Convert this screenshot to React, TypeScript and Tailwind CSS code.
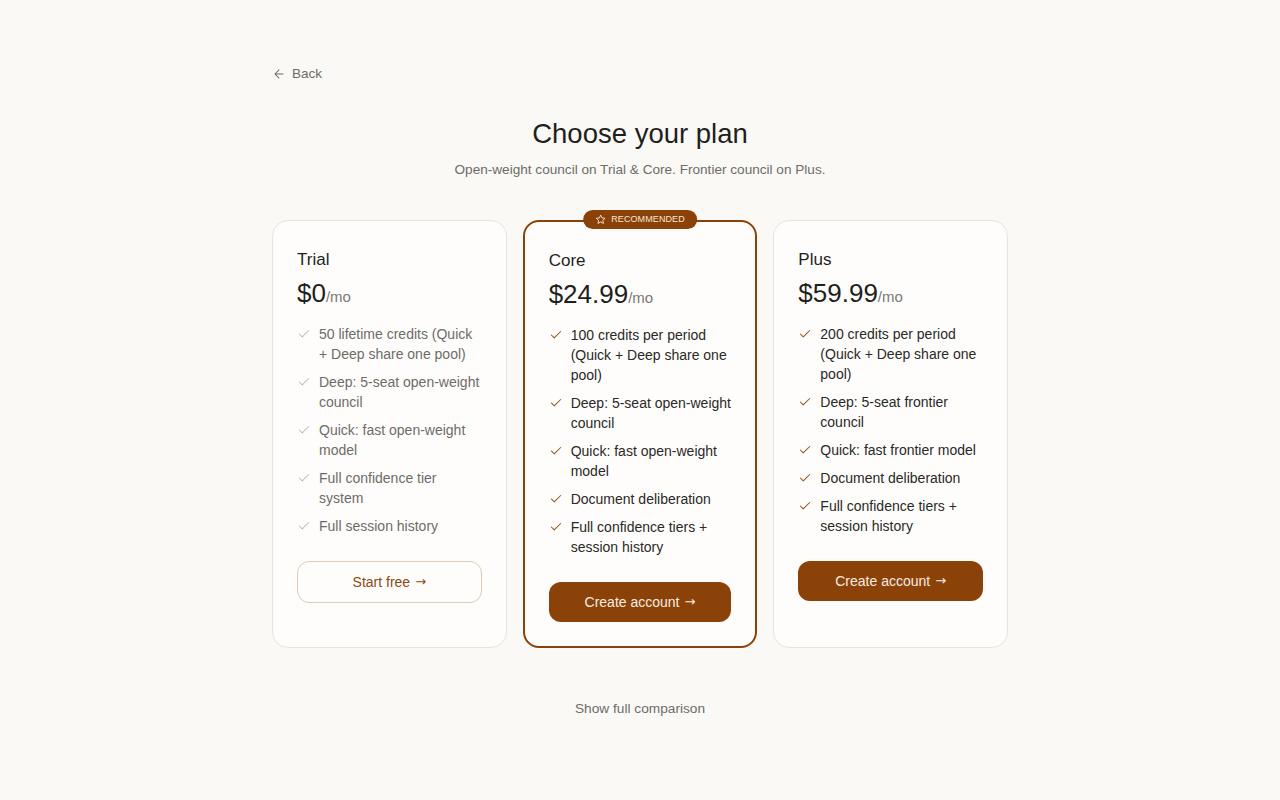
import React from "react";

function Check({ muted }: { muted?: boolean }) {
  return (
    <svg
      viewBox="0 0 24 24"
      className="w-3.5 h-3.5 shrink-0 mt-[3px]"
      fill="none"
      stroke={muted ? "#bdbbb3" : "#9a4d12"}
      strokeWidth={1.75}
      strokeLinecap="round"
      strokeLinejoin="round"
    >
      <path d="M20 6 9 17l-5-5" />
    </svg>
  );
}

function Star() {
  return (
    <svg
      viewBox="0 0 24 24"
      className="w-[11px] h-[11px]"
      fill="none"
      stroke="#f6e7d6"
      strokeWidth={2}
      strokeLinejoin="round"
    >
      <path d="M12 2.5l2.9 6.1 6.6.8-4.9 4.6 1.3 6.6L12 17.3l-5.9 3.3 1.3-6.6-4.9-4.6 6.6-.8z" />
    </svg>
  );
}

type Plan = {
  name: string;
  price: string;
  features: string[];
  cta: string;
  variant: "trial" | "core" | "plus";
};

const plans: Plan[] = [
  {
    name: "Trial",
    price: "$0",
    features: [
      "50 lifetime credits (Quick + Deep share one pool)",
      "Deep: 5-seat open-weight council",
      "Quick: fast open-weight model",
      "Full confidence tier system",
      "Full session history",
    ],
    cta: "Start free",
    variant: "trial",
  },
  {
    name: "Core",
    price: "$24.99",
    features: [
      "100 credits per period (Quick + Deep share one pool)",
      "Deep: 5-seat open-weight council",
      "Quick: fast open-weight model",
      "Document deliberation",
      "Full confidence tiers + session history",
    ],
    cta: "Create account",
    variant: "core",
  },
  {
    name: "Plus",
    price: "$59.99",
    features: [
      "200 credits per period (Quick + Deep share one pool)",
      "Deep: 5-seat frontier council",
      "Quick: fast frontier model",
      "Document deliberation",
      "Full confidence tiers + session history",
    ],
    cta: "Create account",
    variant: "plus",
  },
];

function Card({ plan }: { plan: Plan }) {
  const core = plan.variant === "core";
  const trial = plan.variant === "trial";
  return (
    <div
      className={
        "relative rounded-2xl bg-[#fefdfb] px-6 pt-[27px] pb-6 " +
        (core ? "border-2 border-[#8b4209]" : "border border-[#e8e5de]")
      }
    >
      {core && (
        <div className="absolute left-1/2 -translate-x-1/2 -top-[12px] h-[19px] px-3 rounded-full bg-[#8b4209] flex items-center gap-[5px]">
          <Star />
          <span className="text-[9px] leading-none text-[#f6e7d6] tracking-[0.1px]">RECOMMENDED</span>
        </div>
      )}
      <div className="text-[17px] leading-6 text-[#1f1f1c]">{plan.name}</div>
      <div className="mt-[5px] flex items-baseline h-8">
        <span className="text-[26px] leading-8 text-[#1f1f1c]">{plan.price}</span>
        <span className="text-[15px] text-[#7a7873]">/mo</span>
      </div>
      <ul className="mt-[15px] flex flex-col gap-2">
        {plan.features.map((f) => (
          <li key={f} className="flex gap-2">
            <Check muted={trial} />
            <span className={"text-[14px] leading-5 " + (trial ? "text-[#6e6c67]" : "text-[#2a2926]")}>
              {f}
            </span>
          </li>
        ))}
      </ul>
      <button
        className={
          "mt-[25px] w-full rounded-xl text-[14px] flex items-center justify-center gap-[5px] " +
          (trial
            ? "border border-[#dcccb6] text-[#8b4a14] bg-transparent h-[42px]"
            : "bg-[#8b4209] text-[#f8ece0] h-10")
        }
      >
        <span>{plan.cta}</span>
        <span className="text-[13px]" style={{ fontFamily: '"DejaVu Sans", sans-serif' }}>
          →
        </span>
      </button>
    </div>
  );
}

export default function App() {
  return (
    <div
      className="min-h-screen bg-[#faf9f6] text-[#1f1f1c]"
      style={{ fontFamily: '"Liberation Sans", Arial, sans-serif' }}
    >
      <div className="w-[736px] mx-auto pt-[64px] pb-20">
        <div className="flex items-center gap-[6px] h-5 text-[14px] text-[#6e6c67]">
          <svg
            viewBox="0 0 24 24"
            className="w-3.5 h-3.5"
            fill="none"
            stroke="#6e6c67"
            strokeWidth={1.75}
            strokeLinecap="round"
            strokeLinejoin="round"
          >
            <path d="M19 12H5M12 19l-7-7 7-7" />
          </svg>
          <span className="text-[13.5px]">Back</span>
        </div>
        <h1 className="mt-[32px] text-center text-[27.5px] leading-9 font-normal text-[#1f1f1c]">
          Choose your plan
        </h1>
        <p className="mt-[8px] text-center text-[13.6px] leading-5 text-[#6e6c67]">
          Open-weight council on Trial &amp; Core. Frontier council on Plus.
        </p>
        <div className="mt-[40px] grid grid-cols-3 gap-4">
          {plans.map((p) => (
            <Card key={p.name} plan={p} />
          ))}
        </div>
        <div className="mt-[51px] text-center text-[13.7px] leading-5 text-[#6e6c67]">
          Show full comparison
        </div>
      </div>
    </div>
  );
}
